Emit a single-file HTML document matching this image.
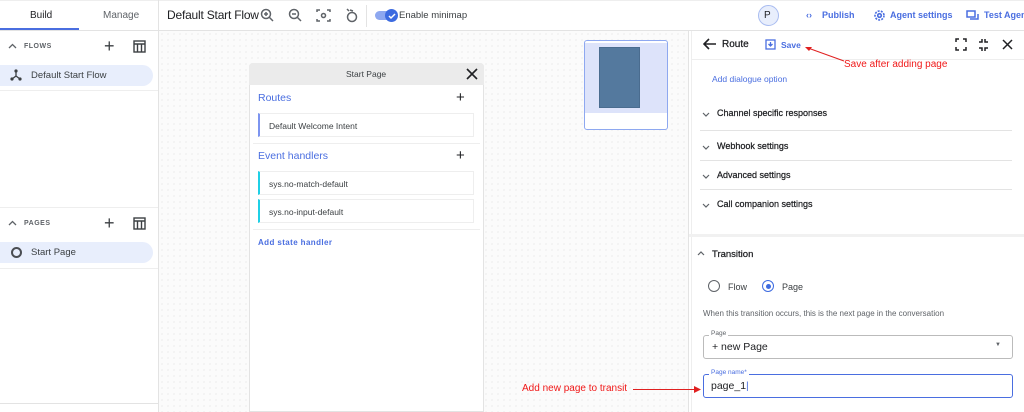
<!DOCTYPE html>
<html><head><style>
*{box-sizing:border-box;margin:0;padding:0}
body{width:1024px;height:412px;overflow:hidden;background:#fff;font-family:"Liberation Sans",sans-serif;color:#3c4043;position:relative}
.a{position:absolute}
.t{position:absolute;white-space:nowrap}
.canvas{left:159px;top:31px;width:529px;height:381px;background-color:#fbfbfb;background-image:radial-gradient(#e2e2e2 0.7px,transparent 0.8px);background-size:6px 6px}
.hl{position:absolute;height:1px;background:#e3e3e3}
.blue{color:#4a6ee0}
.sec{font-size:9px;color:#202124;font-weight:500;-webkit-text-stroke:0.25px #202124}
</style></head><body>
<div class="hl" style="left:0;top:30px;width:1024px"></div>
<div class="hl" style="left:0;top:0;width:1024px;background:#eee"></div>
<div class="a" style="left:158px;top:0;width:1px;height:412px;background:#e3e3e3"></div>
<div class="t" style="left:30px;top:10px;font-size:10px;color:#202124">Build</div>
<div class="t" style="left:103px;top:10px;font-size:10px;color:#5f6368">Manage</div>
<div class="a" style="left:0;top:28px;width:79px;height:2px;background:#4a6ee0"></div>
<div class="t" style="left:167px;top:8px;font-size:12px;color:#202124;letter-spacing:-0.2px">Default Start Flow</div>
<svg class="a" style="left:259px;top:8px" width="110" height="16" fill="none" stroke="#5f6368" stroke-width="1.5">
<circle cx="7" cy="6" r="4.5"/><path d="M10 9l4 4M5 6h4M7 4v4"/>
<circle cx="35" cy="6" r="4.5"/><path d="M38 9l4 4M33 6h4"/>
<path d="M58 4V2h3M68 2h3v2M71 11v2h-3M61 13h-3v-2"/><circle cx="64.5" cy="7.5" r="2"/>
<circle cx="93" cy="9" r="4.5"/><path d="M90 3l-2-2M91 2l3 1"/>
</svg>
<div class="a" style="left:366px;top:5px;width:1px;height:22px;background:#e3e3e3"></div>
<div class="a" style="left:375px;top:11px;width:22px;height:9px;border-radius:5px;background:#8ea8f0"></div>
<div class="a" style="left:385px;top:9px;width:13px;height:13px;border-radius:50%;background:#3d6be0"></div>
<svg class="a" style="left:387px;top:11px" width="10" height="10"><path d="M2 5l2 2 4-4" stroke="#fff" stroke-width="1.5" fill="none"/></svg>
<div class="t" style="left:399px;top:10px;font-size:9.5px;color:#3c4043">Enable minimap</div>
<div class="a" style="left:758px;top:5px;width:21px;height:21px;border-radius:50%;background:#e8eefc;border:1px solid #a9bcf0"></div>
<div class="t" style="left:764px;top:10px;font-size:10px;color:#202124">P</div>
<div class="t blue" style="left:806px;top:10px;font-size:9px;font-weight:bold">‹›&nbsp;&nbsp;&nbsp;&nbsp;Publish</div>
<svg class="a" style="left:873px;top:9px" width="13" height="13" fill="none" stroke="#4a6ee0" stroke-width="1.6"><circle cx="6.5" cy="6.5" r="4.5" stroke-dasharray="2 1.2"/><circle cx="6.5" cy="6.5" r="1.8"/></svg>
<div class="t blue" style="left:890px;top:10px;font-size:9px;font-weight:bold">Agent settings</div>
<svg class="a" style="left:966px;top:10px" width="14" height="12" fill="none" stroke="#4a6ee0" stroke-width="1.5"><rect x="1" y="1" width="8" height="6"/><path d="M4 9h8V4"/></svg>
<div class="t blue" style="left:984px;top:10px;font-size:9px;font-weight:bold">Test Agent</div>

<svg class="a" style="left:8px;top:43px" width="9" height="6" fill="none" stroke="#5f6368" stroke-width="1.3"><path d="M1 5l3.5-3.5L8 5"/></svg>
<div class="t" style="left:24px;top:43px;font-size:7px;font-weight:bold;color:#5f6368;letter-spacing:.5px">FLOWS</div>
<div class="t" style="left:104px;top:36px;font-size:18px;color:#3c4043">+</div>
<svg class="a" style="left:133px;top:40px" width="13" height="13" fill="none" stroke="#3c4043" stroke-width="1.4"><rect x="1" y="1" width="11" height="11"/><path d="M1 4h11M4.5 4v8M8.5 4v8"/></svg>
<div class="a" style="left:0;top:65px;width:153px;height:21px;background:#e8eefc;border-radius:0 11px 11px 0"></div>
<svg class="a" style="left:10px;top:68px" width="12" height="14" fill="#3c4043"><circle cx="6" cy="3" r="1.6"/><circle cx="2" cy="11" r="1.6"/><circle cx="10" cy="11" r="1.6"/><path d="M6 3v5L2 11M6 8l4 3" stroke="#3c4043" stroke-width="1.3" fill="none"/></svg>
<div class="t" style="left:31px;top:70px;font-size:9.5px;color:#3c4043">Default Start Flow</div>
<div class="hl" style="left:0;top:90px;width:158px;background:#eee"></div>
<div class="hl" style="left:0;top:207px;width:158px;background:#eee"></div>
<svg class="a" style="left:8px;top:220px" width="9" height="6" fill="none" stroke="#5f6368" stroke-width="1.3"><path d="M1 5l3.5-3.5L8 5"/></svg>
<div class="t" style="left:24px;top:220px;font-size:7px;font-weight:bold;color:#5f6368;letter-spacing:.5px">PAGES</div>
<div class="t" style="left:104px;top:213px;font-size:18px;color:#3c4043">+</div>
<svg class="a" style="left:133px;top:217px" width="13" height="13" fill="none" stroke="#3c4043" stroke-width="1.4"><rect x="1" y="1" width="11" height="11"/><path d="M1 4h11M4.5 4v8M8.5 4v8"/></svg>
<div class="a" style="left:0;top:242px;width:153px;height:21px;background:#e8eefc;border-radius:0 11px 11px 0"></div>
<div class="a" style="left:11px;top:247px;width:11px;height:11px;border-radius:50%;border:2px solid #4a4d52"></div>
<div class="t" style="left:31px;top:247px;font-size:9.5px;color:#3c4043">Start Page</div>
<div class="hl" style="left:0;top:268px;width:158px;background:#eee"></div>
<div class="hl" style="left:0;top:403px;width:158px;background:#e3e3e3"></div>

<div class="a canvas"></div>
<div class="a" style="left:249px;top:63px;width:235px;height:349px;background:#fff;border:1px solid #e3e3e3;border-radius:4px 4px 0 0"></div>
<div class="a" style="left:249px;top:63px;width:235px;height:22px;background:#ebebeb;border-radius:4px 4px 0 0"></div>
<div class="t" style="left:346px;top:69px;font-size:8.5px;color:#3c4043">Start Page</div>
<svg class="a" style="left:466px;top:68px" width="12" height="12" stroke="#202124" stroke-width="1.6"><path d="M1 1l10 10M11 1L1 11"/></svg>
<div class="t blue" style="left:258px;top:92px;font-size:10.5px">Routes</div>
<div class="t" style="left:456px;top:89px;font-size:15px;color:#202124">+</div>
<div class="a" style="left:258px;top:113px;width:216px;height:24px;border:1px solid #eee;border-left:2px solid #7d95f0"></div>
<div class="t" style="left:269px;top:121px;font-size:8.5px;color:#3c4043">Default Welcome Intent</div>
<div class="hl" style="left:253px;top:143px;width:227px;background:#eee"></div>
<div class="t blue" style="left:258px;top:150px;font-size:10.5px">Event handlers</div>
<div class="t" style="left:456px;top:147px;font-size:15px;color:#202124">+</div>
<div class="a" style="left:258px;top:171px;width:216px;height:24px;border:1px solid #eee;border-left:2px solid #1fd0e6"></div>
<div class="t" style="left:269px;top:179px;font-size:8.5px;color:#3c4043">sys.no-match-default</div>
<div class="a" style="left:258px;top:199px;width:216px;height:24px;border:1px solid #eee;border-left:2px solid #1fd0e6"></div>
<div class="t" style="left:269px;top:207px;font-size:8.5px;color:#3c4043">sys.no-input-default</div>
<div class="hl" style="left:253px;top:229px;width:227px;background:#eee"></div>
<div class="t blue" style="left:258px;top:238px;font-size:8px;font-weight:bold;letter-spacing:.4px">Add state handler</div>
<div class="a" style="left:584px;top:40px;width:84px;height:90px;background:#fff;border:1px solid #8ea8f0;border-radius:3px"></div>
<div class="a" style="left:585px;top:43px;width:82px;height:70px;background:#dde3fa"></div>
<div class="a" style="left:599px;top:47px;width:41px;height:61px;background:#54799e;border:1px solid #4a6c8f"></div>

<div class="a" style="left:688px;top:31px;width:1px;height:381px;background:#e3e3e3"></div>
<div class="a" style="left:691px;top:31px;width:1px;height:381px;background:#eee"></div>
<svg class="a" style="left:703px;top:38px" width="14" height="12" stroke="#202124" stroke-width="1.6" fill="none"><path d="M13 6H2M6 1L1 6l5 5"/></svg>
<div class="t sec" style="left:722px;top:39px;font-size:10px">Route</div>
<svg class="a" style="left:765px;top:39px" width="11" height="11" fill="none" stroke="#4a6ee0" stroke-width="1.3"><rect x="1" y="1" width="9" height="9"/><path d="M5.5 3v4M3.5 5l2 2 2-2"/></svg>
<div class="t blue" style="left:781px;top:40px;font-size:8.5px;font-weight:bold">Save</div>
<svg class="a" style="left:955px;top:38px" width="60" height="14" fill="none" stroke="#202124" stroke-width="1.5"><path d="M1 4V1h3M8 1h3v3M11 9v3H8M4 12H1V9"/><path d="M27 1v3h-3M30 1v3h3M27 13v-3h-3M30 13v-3h3"/><path d="M48 2l9 9M57 2l-9 9"/></svg>
<div class="hl" style="left:692px;top:59px;width:332px;background:#eee"></div>
<svg class="a" style="left:800px;top:45px" width="50" height="22"><path d="M44 16L8 3" stroke="#e02020" stroke-width="1"/><path d="M5 2l7 0-3 4z" fill="#e02020"/></svg>
<div class="t" style="left:844px;top:59px;font-size:10px;color:#f01818">Save after adding page</div>
<div class="t blue" style="left:712px;top:74px;font-size:8.5px">Add dialogue option</div>
<svg class="a" style="left:702px;top:112px" width="8" height="5" fill="none" stroke="#5f6368" stroke-width="1.2"><path d="M1 1l3 3 3-3"/></svg>
<div class="t sec" style="left:717px;top:108px">Channel specific responses</div>
<div class="hl" style="left:700px;top:130px;width:312px"></div>
<svg class="a" style="left:702px;top:145px" width="8" height="5" fill="none" stroke="#5f6368" stroke-width="1.2"><path d="M1 1l3 3 3-3"/></svg>
<div class="t sec" style="left:717px;top:141px">Webhook settings</div>
<div class="hl" style="left:700px;top:160px;width:312px"></div>
<svg class="a" style="left:702px;top:174px" width="8" height="5" fill="none" stroke="#5f6368" stroke-width="1.2"><path d="M1 1l3 3 3-3"/></svg>
<div class="t sec" style="left:717px;top:170px">Advanced settings</div>
<div class="hl" style="left:700px;top:189px;width:312px"></div>
<svg class="a" style="left:702px;top:203px" width="8" height="5" fill="none" stroke="#5f6368" stroke-width="1.2"><path d="M1 1l3 3 3-3"/></svg>
<div class="t sec" style="left:717px;top:199px">Call companion settings</div>
<div class="a" style="left:689px;top:234px;width:335px;height:3px;background:#f1f1f1"></div>
<svg class="a" style="left:697px;top:251px" width="8" height="5" fill="none" stroke="#5f6368" stroke-width="1.2"><path d="M1 4l3-3 3 3"/></svg>
<div class="t sec" style="left:712px;top:249px;font-size:9.5px">Transition</div>
<div class="a" style="left:708px;top:280px;width:12px;height:12px;border-radius:50%;border:1.5px solid #5f6368"></div>
<div class="t" style="left:728px;top:282px;font-size:9px;color:#3c4043">Flow</div>
<div class="a" style="left:762px;top:280px;width:12px;height:12px;border-radius:50%;border:1.5px solid #3d6be0"></div>
<div class="a" style="left:765.5px;top:283.5px;width:5px;height:5px;border-radius:50%;background:#3d6be0"></div>
<div class="t" style="left:782px;top:282px;font-size:9px;color:#3c4043">Page</div>
<div class="t" style="left:703px;top:309px;font-size:8px;color:#5f6368">When this transition occurs, this is the next page in the conversation</div>
<div class="a" style="left:703px;top:335px;width:310px;height:24px;border:1px solid #bbb;border-radius:3px"></div>
<div class="t" style="left:709px;top:330px;font-size:6.5px;color:#5f6368;background:#fff;padding:0 2px">Page</div>
<div class="t" style="left:712px;top:341px;font-size:10.5px;color:#202124">+ new Page</div>
<div class="t" style="left:995px;top:342px;font-size:6px;color:#5f6368">▼</div>
<div class="a" style="left:703px;top:374px;width:310px;height:24px;border:1.5px solid #4a6ee0;border-radius:3px"></div>
<div class="t" style="left:709px;top:369px;font-size:6.5px;color:#4a6ee0;background:#fff;padding:0 2px">Page name*</div>
<div class="t" style="left:711px;top:380px;font-size:10.5px;color:#202124">page_1<span style="color:#4a6ee0">|</span></div>
<div class="t" style="left:522px;top:383px;font-size:10px;color:#f01818">Add new page to transit</div>
<div class="a" style="left:633px;top:389px;width:63px;height:1px;background:#e02020"></div>
<svg class="a" style="left:694px;top:386px" width="8" height="7"><path d="M0 0l7 3.5L0 7z" fill="#e02020"/></svg>
</body></html>
